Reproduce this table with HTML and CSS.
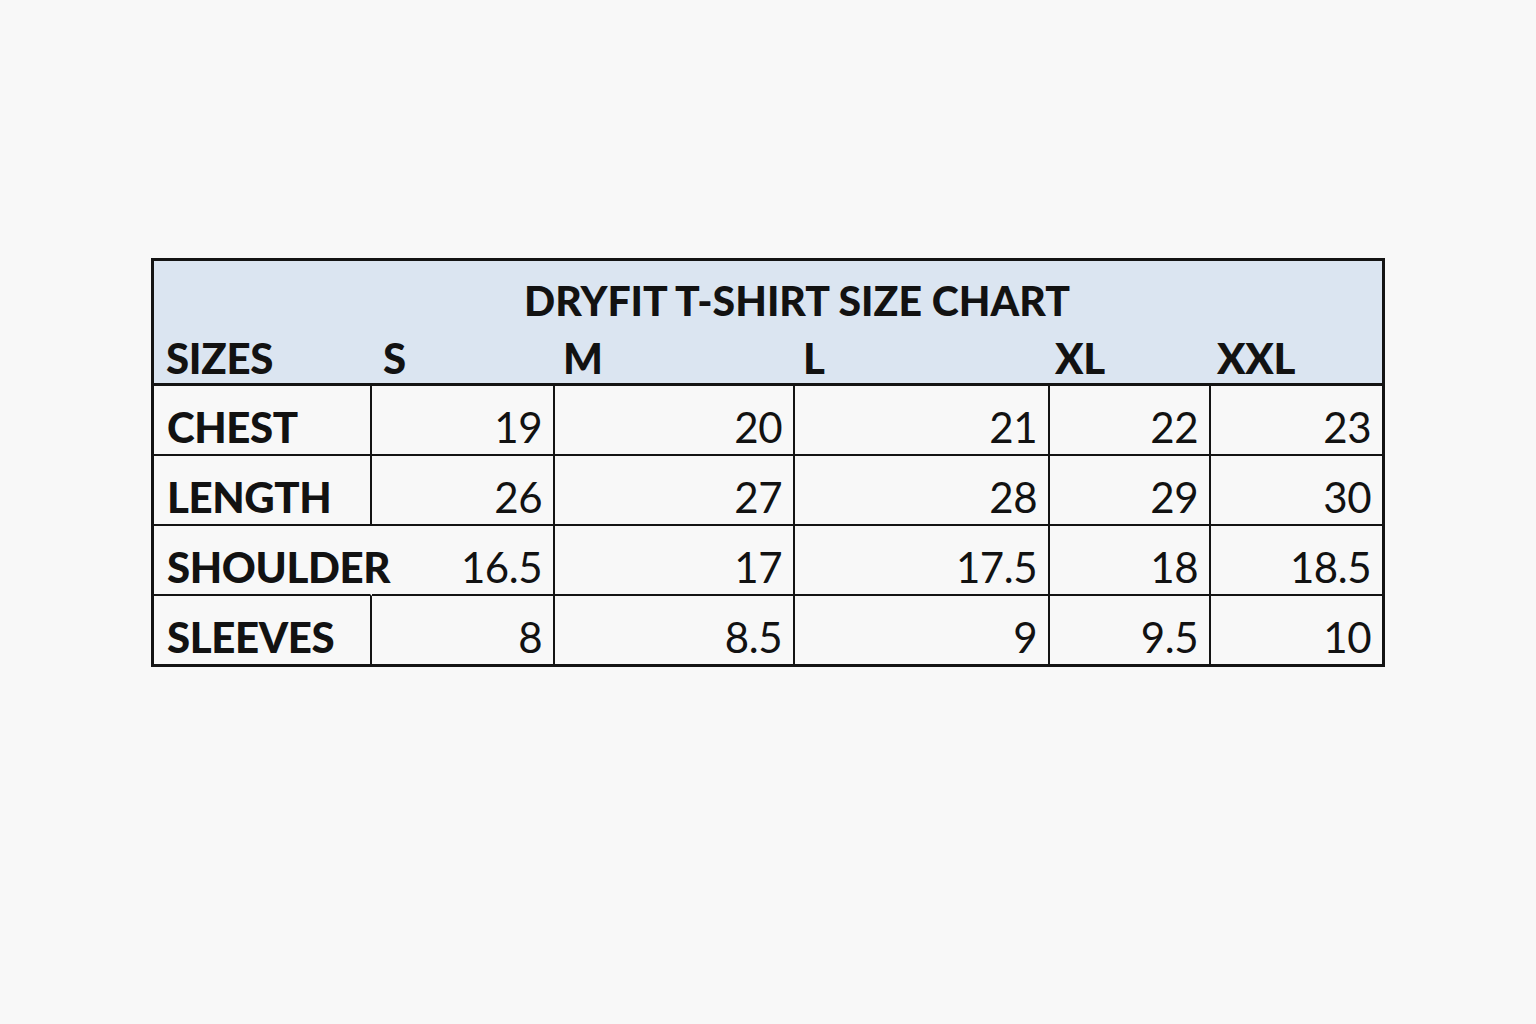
FILE: index.html
```html
<!DOCTYPE html>
<html lang="en">
<head>
<meta charset="utf-8">
<title>Dryfit T-Shirt Size Chart</title>
<link rel="stylesheet" href="styles.css">
</head>
<body>
<main class="page">
  <table class="chart">
    <colgroup>
      <col class="c1"><col class="c2"><col class="c3"><col class="c4"><col class="c5"><col class="c6">
    </colgroup>
    <thead>
      <tr><th class="title" colspan="6">DRYFIT T-SHIRT SIZE CHART</th></tr>
      <tr class="sizes">
        <th class="sz sz-label">SIZES</th>
        <th class="sz sz-s">S</th>
        <th class="sz sz-m">M</th>
        <th class="sz sz-l">L</th>
        <th class="sz sz-xl">XL</th>
        <th class="sz sz-xxl">XXL</th>
      </tr>
    </thead>
    <tbody>
      <tr>
        <th class="label">CHEST</th>
        <td>19</td><td>20</td><td>21</td><td>22</td><td class="last">23</td>
      </tr>
      <tr>
        <th class="label">LENGTH</th>
        <td>26</td><td>27</td><td>28</td><td>29</td><td class="last">30</td>
      </tr>
      <tr>
        <th class="label open">SHOULDER</th>
        <td>16.5</td><td>17</td><td>17.5</td><td>18</td><td class="last">18.5</td>
      </tr>
      <tr class="final">
        <th class="label">SLEEVES</th>
        <td>8</td><td>8.5</td><td>9</td><td>9.5</td><td class="last">10</td>
      </tr>
    </tbody>
  </table>
</main>
</body>
</html>
```
FILE: styles.css
```css
html, body {
  margin: 0;
  padding: 0;
  background: #f8f8f8;
}
body {
  font-family: "Lato", "Liberation Sans", sans-serif;
  color: #121212;
}
.page {
  padding: 258px 0 0 151px;
}
.chart {
  width: 1234px;
  table-layout: fixed;
  border-collapse: separate;
  border-spacing: 0;
  border: 3px solid #141414;
}
.c1 { width: 218px; }
.c2 { width: 183px; }
.c3 { width: 240px; }
.c4 { width: 255px; }
.c5 { width: 161px; }
.c6 { width: 171px; }

thead th {
  background: #dbe5f1;
  font-weight: 900;
  text-align: left;
  white-space: nowrap;
}
.title {
  font-size: 41px;
  line-height: 40px;
  padding: 20px 0 0 58px;
  text-align: center;
}
.sz {
  font-size: 42px;
  line-height: 40px;
  padding: 17px 0 5px 0;
  border-bottom: 3px solid #141414;
  letter-spacing: -0.3px;
}
.sz-label { padding-left: 12px; }
.sz-s { padding-left: 11px; }
.sz-m { padding-left: 8px; }
.sz-l { padding-left: 8px; }
.sz-xl { padding-left: 5px; }
.sz-xxl { padding-left: 6px; }

tbody th, tbody td {
  font-size: 42px;
  line-height: 42px;
  padding: 20px 11px 6px 14px;
  border-right: 2px solid #141414;
  border-bottom: 2px solid #141414;
  white-space: nowrap;
}
tbody th.label {
  font-weight: 900;
  text-align: left;
  padding-left: 13px;
  letter-spacing: -0.4px;
  overflow: visible;
}
tbody th.open {
  border-right-color: transparent;
}
tbody td {
  font-weight: 400;
  text-align: right;
  letter-spacing: -0.5px;
}
tbody td.last {
  border-right: none;
}
tbody tr.final th, tbody tr.final td {
  border-bottom: none;
}
```
